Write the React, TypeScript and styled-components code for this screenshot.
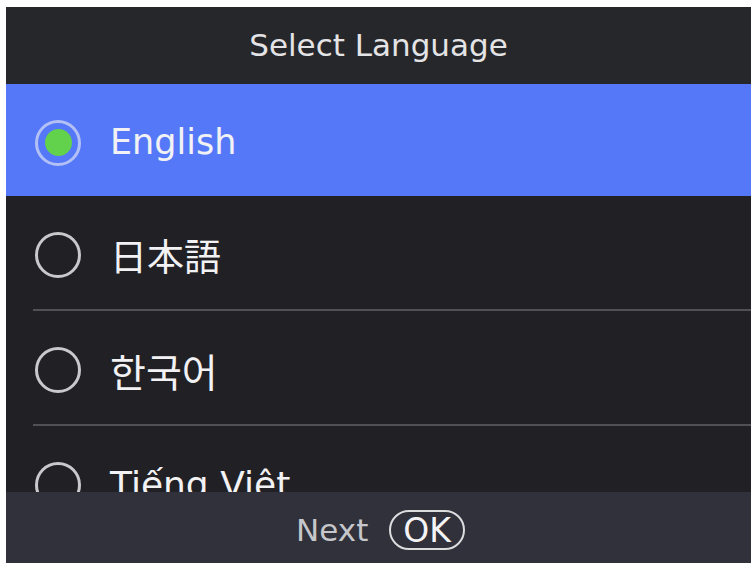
import styled, { createGlobalStyle } from "styled-components";

type Language = {
  code: string;
  label: string;
  font: string;
  size: number;
};

const languages: Array<Language> = [
  { code: "en", label: "English", font: `"DejaVu Sans", sans-serif`, size: 35 },
  { code: "ja", label: "日本語", font: `"Noto Sans CJK JP", sans-serif`, size: 37 },
  { code: "ko", label: "한국어", font: `"Noto Sans CJK KR", sans-serif`, size: 39 },
  { code: "vi", label: "Tiếng Việt", font: `"DejaVu Sans", sans-serif`, size: 36 },
];

const GlobalStyle = createGlobalStyle`
  html, body {
    margin: 0;
    padding: 0;
    background: #ffffff;
  }
  #root {
    height: 568px;
  }
`;

const Frame = styled.div`
  box-sizing: border-box;
  height: 568px;
  padding: 7px 3px 5px 6px;
`;

const Screen = styled.div`
  display: flex;
  flex-direction: column;
  height: 100%;
  background: #212125;
  font-family: "DejaVu Sans", sans-serif;
  overflow: hidden;
`;

const Header = styled.header`
  display: flex;
  align-items: center;
  justify-content: center;
  flex: 0 0 77px;
  background: #26272b;
  color: #e4e4e6;
  font-size: 31px;
  padding-bottom: 2px;
  box-sizing: border-box;
`;

const List = styled.ul`
  flex: 1;
  margin: 0;
  padding: 0;
  list-style-type: none;
  overflow: hidden;
`;

const Row = styled.li<{ $selected: boolean }>`
  position: relative;
  display: flex;
  align-items: center;
  gap: 29px;
  height: ${(p) => (p.$selected ? "112px" : "115px")};
  padding: 5px 0 0 29px;
  box-sizing: border-box;
  background: ${(p) => (p.$selected ? "#5578f8" : "transparent")};

  &:not(:first-child) {
    padding-bottom: 2px;
  }

  &:not(:first-child)::after {
    content: "";
    position: absolute;
    left: 27px;
    right: 0;
    bottom: 0;
    height: 2px;
    background: #505055;
  }
`;

const Radio = styled.span<{ $checked: boolean }>`
  display: flex;
  align-items: center;
  justify-content: center;
  width: 46px;
  height: 46px;
  flex: 0 0 46px;
  box-sizing: border-box;
  border-radius: 50%;
  border: 3px solid ${(p) => (p.$checked ? "#b3c0f6" : "#c9c9cc")};

  &::before {
    content: "";
    display: ${(p) => (p.$checked ? "block" : "none")};
    width: 27px;
    height: 27px;
    border-radius: 50%;
    background: #62d14c;
  }
`;

const Label = styled.span<{ $font: string; $size: number }>`
  color: #f2f2f4;
  font-family: ${(p) => p.$font};
  font-size: ${(p) => p.$size}px;
  line-height: 1;
  white-space: nowrap;
`;

const Footer = styled.footer`
  display: flex;
  align-items: center;
  justify-content: center;
  gap: 21px;
  flex: 0 0 71px;
  box-sizing: border-box;
  padding: 5px 0 0 4px;
  background: #30313a;
  color: #c6c7cb;
  font-size: 31px;
`;

const KeyPill = styled.span`
  display: inline-flex;
  align-items: center;
  justify-content: center;
  height: 40px;
  padding: 0 12px;
  box-sizing: border-box;
  border: 2px solid #dcdcdf;
  border-radius: 20px;
  color: #f4f4f6;
  font-size: 33px;
  line-height: 1;
`;

const App = () => (
  <>
    <GlobalStyle />
    <Frame>
      <Screen>
        <Header>Select Language</Header>
        <List>
          {languages.map((lang, i) => (
            <Row key={lang.code} $selected={i === 0}>
              <Radio $checked={i === 0} />
              <Label $font={lang.font} $size={lang.size}>
                {lang.label}
              </Label>
            </Row>
          ))}
        </List>
        <Footer>
          <span>Next</span>
          <KeyPill>OK</KeyPill>
        </Footer>
      </Screen>
    </Frame>
  </>
);

export default App;
